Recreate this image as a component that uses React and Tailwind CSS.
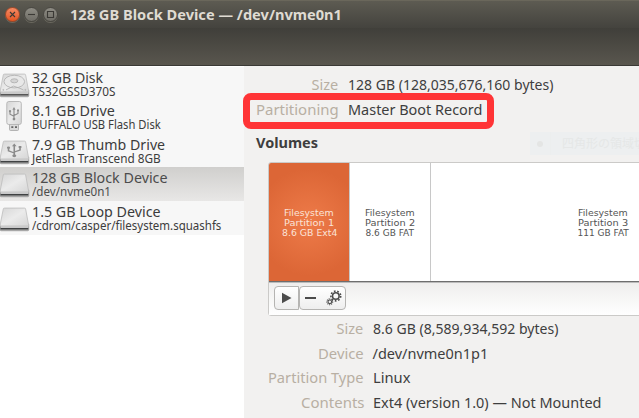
import React, { useLayoutEffect, useRef, useState } from "react";

// Text squeezed or stretched horizontally to fill a given width.
function Fit({ w, className = "", children }) {
  const ref = useRef(null);
  const [scale, setScale] = useState(1);
  useLayoutEffect(() => {
    setScale(w / ref.current.offsetWidth);
  }, [w, children]);
  return (
    <span className={"block whitespace-nowrap " + className} style={{ width: w }}>
      <span ref={ref} className="inline-block origin-left" style={{ transform: `scaleX(${scale})` }}>
        {children}
      </span>
    </span>
  );
}

function Defs() {
  return (
    <defs>
      <linearGradient id="metal" x1="0" y1="0" x2="1" y2="1">
        <stop offset="0" stopColor="#d6d6d6" />
        <stop offset="0.5" stopColor="#ebebeb" />
        <stop offset="1" stopColor="#d6d6d6" />
      </linearGradient>
      <linearGradient id="edge" x1="0" y1="0" x2="0" y2="1">
        <stop offset="0" stopColor="#c9c9c9" />
        <stop offset="1" stopColor="#9a9a9a" />
      </linearGradient>
    </defs>
  );
}

const UsbMark = () => (
  <g stroke="#8b8b8b" fill="none" strokeWidth="1.4">
    <path d="M14.5 19V6M14.5 15L9.5 12.5V9M14.5 14L19.5 11.5V8" />
    <path d="M12.5 7L14.5 3.5L16.5 7ZM18.3 6.7h2.4v2.2h-2.4z" fill="#8b8b8b" stroke="none" />
    <circle cx="9.5" cy="8.7" r="1.4" fill="#8b8b8b" stroke="none" />
    <circle cx="14.5" cy="18.6" r="1.7" fill="#8b8b8b" stroke="none" />
  </g>
);

function DriveIcon({ kind }) {
  if (kind === "stick")
    return (
      <svg width="30" height="32" viewBox="0 0 30 32" className="block">
        <Defs />
        <path d="M9.5 23h9v6.5a1 1 0 0 1-1 1h-7a1 1 0 0 1-1-1z" fill="#dadada" stroke="#a4a4a4" strokeWidth=".8" />
        <path d="M11.3 26.3h2v1.8h-2zM15 26.3h2v1.8h-2z" fill="#666" />
        <rect x="6.8" y="1.5" width="14.5" height="23" rx="2" fill="url(#metal)" stroke="#b2b2b2" strokeWidth=".9" />
        <g transform="translate(2.4 4.2) scale(.8)">
          <UsbMark />
        </g>
      </svg>
    );
  return (
    <svg width="30" height="32" viewBox="0 -2.6 30 32" className="block">
      <Defs />
      <path d="M0 20.5V26a1.2 1.2 0 0 0 1.2 1.2H27.6a1.2 1.2 0 0 0 1.2-1.2V20.5z" fill="url(#edge)" stroke="#9a9a9a" strokeWidth=".6" />
      <path d="M.5 24.2H28.3V25.8H.5z" fill={kind === "disk" ? "#555" : "#3f4142"} />
      <path d="M1 22.6H28V24.2H1z" fill="#e4e4e4" opacity=".8" />
      <path d="M4.3 4.5H24.6a1 1 0 0 1 1 .8L28.6 21.4a.9.9 0 0 1-.9 1H1a.9.9 0 0 1-.9-1L3.3 5.3a1 1 0 0 1 1-.8z" fill="url(#metal)" stroke="#bdbdbd" strokeWidth=".8" />
      {kind === "thumb" && (
        <g transform="translate(-2.4 4) scale(1.15 .82)">
          <UsbMark />
        </g>
      )}
      {kind === "disk" && (
        <g fill="none" stroke="#adadad" strokeWidth=".8">
          <ellipse cx="14.3" cy="12" rx="10.3" ry="6.3" fill="#e8e8e8" />
          <ellipse cx="14.3" cy="11.2" rx="3.6" ry="2" fill="#d4d4d4" />
          <path d="M6 20.3L13.5 16.5L20 18.7L23.5 20.5" />
          <circle cx="3.3" cy="20.3" r=".5" />
          <circle cx="25.3" cy="20.3" r=".5" />
        </g>
      )}
    </svg>
  );
}

const DEVICES = [
  { kind: "disk", title: "32 GB Disk", tw: 71, sub: "TS32GSSD370S", sw: 83 },
  { kind: "stick", title: "8.1 GB Drive", tw: 83, sub: "BUFFALO USB Flash Disk", sw: 128.5 },
  { kind: "thumb", title: "7.9 GB Thumb Drive", tw: 133, sub: "JetFlash Transcend 8GB", sw: 129 },
  { kind: "block", title: "128 GB Block Device", tw: 136, sub: "/dev/nvme0n1", sw: 79, selected: true },
  { kind: "block", title: "1.5 GB Loop Device", tw: 129, sub: "/cdrom/casper/filesystem.squashfs", sw: 189.5 },
];

const DETAILS = [
  ["Size", 27, "8.6 GB (8,589,934,592 bytes)", 185],
  ["Device", 46, "/dev/nvme0n1p1", 116],
  ["Partition Type", 96, "Linux", 37.5],
  ["Contents", 63, "Ext4 (version 1.0) — Not Mounted", 228.5],
];

function Device({ d }) {
  return (
    <div className={"flex h-[33.6px] " + (d.selected ? "bg-linear-to-b from-[#d0cfcd] to-[#e8e7e6] text-[#4c4c4c]" : "bg-[#f7f7f7] text-[#3c3c3c]")}>
      <div className="w-8 shrink-0">
        <DriveIcon kind={d.kind} />
      </div>
      <div className="pt-[2px]">
        <Fit w={d.tw} className="text-[14.5px] leading-4">{d.title}</Fit>
        <Fit w={d.sw} className="text-[12.5px] leading-[14px]">{d.sub}</Fit>
      </div>
    </div>
  );
}

function WindowButton({ close, children }) {
  return (
    <span
      className={
        "flex size-[15px] items-center justify-center rounded-full border shadow-[0_1px_0_#6b695f] " +
        (close ? "border-[#a34a29] bg-linear-to-b from-[#f58a63] to-[#e3541f]" : "border-[#4a4842] bg-linear-to-b from-[#8e8c84] to-[#6f6d66]")
      }
    >
      <svg width="9" height="9" viewBox="0 0 9 9" fill="none" stroke="#3b3935" strokeWidth="1.1">
        {children}
      </svg>
    </span>
  );
}

function Partition({ lines, className }) {
  return (
    <div className={"flex shrink-0 flex-col items-center justify-center border-[#c8c8c8] pt-[2px] font-['DejaVu_Sans'] text-[9px] leading-[10px] " + className}>
      {lines.map(([t, w]) => (
        <Fit key={t} w={w}>{t}</Fit>
      ))}
    </div>
  );
}

function Gear({ cx, cy, r, sw }) {
  const c = 2 * Math.PI * (r + sw);
  return (
    <g fill="none" stroke="#4c4c4c">
      <circle cx={cx} cy={cy} r={r} strokeWidth={sw} />
      <circle cx={cx} cy={cy} r={r + sw} strokeWidth={sw} strokeDasharray={`${c / 18} ${c / 18}`} />
    </g>
  );
}

export default function App() {
  return (
    <div className="flex h-[418px] w-[639px] flex-col overflow-hidden bg-[#f2f1f0] font-['Noto_Sans','Noto_Sans_CJK_JP',sans-serif]">
      <header className="flex h-7 shrink-0 items-center border-t border-[#6a675b] bg-linear-to-b from-[#5d5b52] to-[#44433e] pl-[5px]">
        <div className="flex gap-[4px]">
          <WindowButton close><path d="M2 2L7 7M7 2L2 7" /></WindowButton>
          <WindowButton><path d="M1 4.5H8" /></WindowButton>
          <WindowButton><path d="M1.5 1.5H7.5V7.5H1.5z" /></WindowButton>
        </div>
        <Fit w={272} className="ml-[12px] pb-[2px] text-[14.5px] leading-5 font-bold text-[#dfdbd2]">
          128 GB Block Device — /dev/nvme0n1
        </Fit>
      </header>
      <div className="h-[38px] shrink-0 border-b border-[#3a3935] bg-linear-to-b from-[#403f3a] to-[#59564e]" />

      <div className="flex min-h-0 grow">
        <aside className="w-[244px] shrink-0 bg-white pt-[.6px]">
          {DEVICES.map((d) => <Device key={d.title} d={d} />)}
        </aside>

        <main className="relative flex min-w-0 grow flex-col text-[14.5px] text-[#3e3e3e]">
          <div className="flex flex-col pt-[6px]">
            <div className="flex h-[25px] items-center leading-[25px]">
              <div className="flex w-[94.5px] justify-end text-[#b8afa3]"><Fit w={27}>Size</Fit></div>
              <Fit w={205} className="ml-[9.5px]">128 GB (128,035,676,160 bytes)</Fit>
            </div>
            <div className="flex h-[25px] items-center leading-[25px]">
              <div className="flex w-[94.5px] justify-end text-[#b8afa3]"><Fit w={82.5}>Partitioning</Fit></div>
              <Fit w={134.5} className="ml-[9.5px]">Master Boot Record</Fit>
            </div>
          </div>
          <div className="mt-[8px] h-6 pl-[12px] leading-6 font-bold">
            <Fit w={62}>Volumes</Fit>
          </div>

          <div className="mt-[7.5px] ml-[24px] flex h-[154px] w-[420px] shrink-0 flex-col rounded-[3px] border border-[#cbcac8] bg-white">
            <div className="flex h-[119px] shrink-0 border-b border-[#6e6e6e]">
              <Partition
                className="w-[81px] rounded-tl-[2px] border-r bg-[radial-gradient(circle_at_50%_50%,#ee7b49,#dc6636_75%)] text-[#fbe3d8]"
                lines={[["Filesystem", 50], ["Partition 1", 50], ["8.6 GB Ext4", 55]]}
              />
              <Partition
                className="w-[81px] border-r text-[#555]"
                lines={[["Filesystem", 50], ["Partition 2", 50], ["8.6 GB FAT", 49]]}
              />
              <Partition
                className="w-[344px] text-[#555]"
                lines={[["Filesystem", 50], ["Partition 3", 50], ["111 GB FAT", 51]]}
              />
            </div>
            <div className="flex grow items-center border-t border-[#bbb] bg-linear-to-b from-[#efeeed] to-white pb-[2px] pl-[5px]">
              <div className="flex h-6 w-[25px] items-center justify-center rounded-l-[4px] border border-[#b5b4b2] bg-linear-to-b from-white to-[#eee]">
                <svg width="10" height="12" viewBox="0 0 10 12"><path d="M0 .7L9.5 6L0 11.3z" fill="#4c4c4c" /></svg>
              </div>
              <div className="flex h-6 w-[47px] items-center justify-between rounded-[4px] border border-[#b5b4b2] bg-linear-to-b from-white to-[#eee] pr-[3px] pl-[5px]">
                <span className="h-[2px] w-[11px] bg-[#4c4c4c]" />
                <svg width="16" height="16" viewBox="0 0 16 16">
                  <Gear cx={9.8} cy={6} r={3.3} sw={1.6} />
                  <Gear cx={3.8} cy={11.8} r={1.8} sw={1.1} />
                </svg>
              </div>
            </div>
          </div>

          <div className="mt-[.5px] flex flex-col">
            {DETAILS.map(([label, lw, value, vw]) => (
              <div key={label} className="flex h-[24.7px] shrink-0 items-center leading-[25px]">
                <div className="flex w-[119.5px] justify-end text-[#b8afa3]"><Fit w={lw}>{label}</Fit></div>
                <Fit w={vw} className="ml-[9px]">{value}</Fit>
              </div>
            ))}
          </div>

          <div className="absolute top-[27px] left-[-1px] h-[35.5px] w-[251px] rounded-[8px] border-[7.5px] border-[#ff3436]" />
          <div className="absolute top-[66px] left-[286px] flex h-[23px] w-[109px] items-center overflow-hidden bg-[#edeff0] text-[12px] text-[#e5e7e7]">
            <span className="flex h-full w-[21px] shrink-0 items-center justify-center border-r border-[#eceeee]">
              <span className="size-[6px] rounded-full bg-[#e4e5e4]" />
            </span>
            <span className="ml-[11px] whitespace-nowrap">四角形の領域切</span>
          </div>
        </main>
      </div>
    </div>
  );
}
